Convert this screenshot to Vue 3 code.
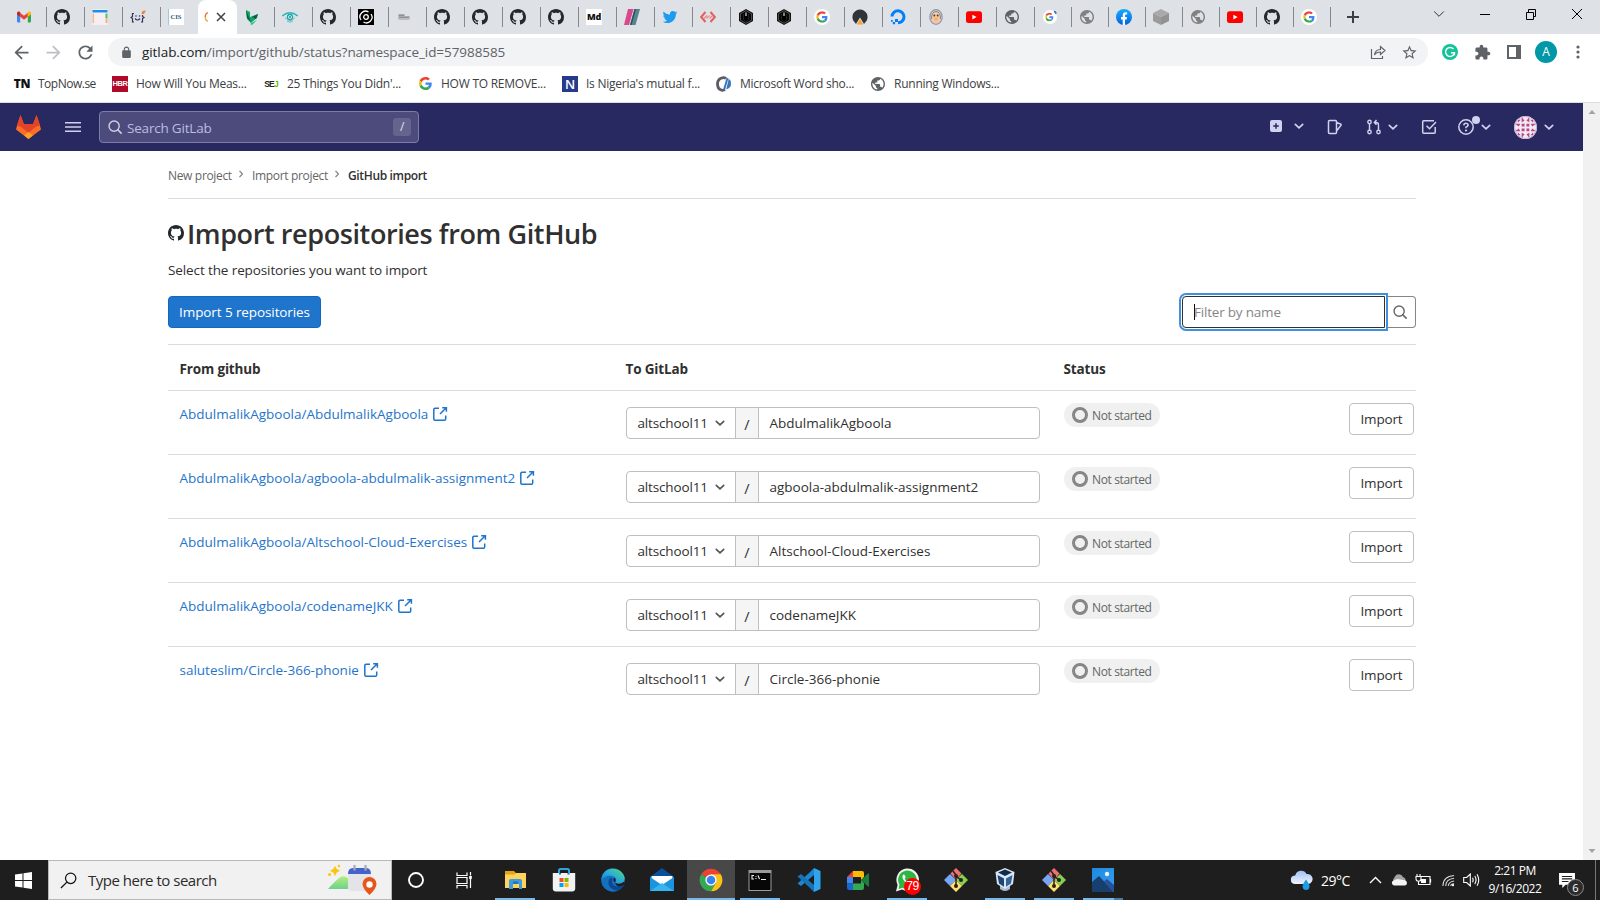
<script setup>
const leftTabs = [
  'gmail', 'github', 'board', 'bracket', 'cis', 'active', 'leaf', 'eye', 'github', 'spiral',
  'lines', 'github', 'github', 'github', 'github', 'md', 'stripes', 'twitter', 'code', 'hex',
  'hex', 'googlew', 'tent', 'ocean', 'face', 'youtube', 'globe',
]
const rightTabs = ['googlet', 'globeg', 'facebook', 'cube', 'globeg', 'youtube', 'github', 'googlew']

// Favicons made of lettering rather than a drawn shape
const lettered = { cis: 'CIS', md: 'Md', tn: 'TN', hbr: 'HBR', nn: 'N' }

const bookmarks = [
  { icon: 'tn', label: 'TopNow.se' },
  { icon: 'hbr', label: 'How Will You Meas...' },
  { icon: 'sej', label: "25 Things You Didn'..." },
  { icon: 'google', label: 'HOW TO REMOVE...' },
  { icon: 'nn', label: "Is Nigeria's mutual f..." },
  { icon: 'cslash', label: 'Microsoft Word sho...' },
  { icon: 'globe', label: 'Running Windows...' },
]

const repos = [
  { owner: 'AbdulmalikAgboola', name: 'AbdulmalikAgboola' },
  { owner: 'AbdulmalikAgboola', name: 'agboola-abdulmalik-assignment2' },
  { owner: 'AbdulmalikAgboola', name: 'Altschool-Cloud-Exercises' },
  { owner: 'AbdulmalikAgboola', name: 'codenameJKK' },
  { owner: 'saluteslim', name: 'Circle-366-phonie' },
]

const apps = [
  { icon: 'explorer', open: true },
  { icon: 'store' },
  { icon: 'edge' },
  { icon: 'mail' },
  { icon: 'chrome', open: true, active: true },
  { icon: 'cmd', open: true },
  { icon: 'vscode' },
  { icon: 'meet' },
  { icon: 'whatsapp', open: true, badge: '79' },
  { icon: 'git' },
  { icon: 'vbox', open: true },
  { icon: 'git', open: true },
  { icon: 'photos', open: true, stacked: true },
]
</script>

<template>
  <div class="screen">
    <svg class="defs" aria-hidden="true">
      <defs>
        <linearGradient id="g-edge" x1="0" y1="1" x2="1" y2="0">
          <stop offset="0" stop-color="#1176c9" /><stop offset=".5" stop-color="#27a9e0" /><stop offset="1" stop-color="#5fdf5a" />
        </linearGradient>
        <linearGradient id="g-hill" x1="0" y1="0" x2="0" y2="1">
          <stop offset="0" stop-color="#b4ef7c" /><stop offset="1" stop-color="#6ccf8e" />
        </linearGradient>
        <linearGradient id="g-cloud" x1="0" y1="0" x2="0" y2="1">
          <stop offset="0" stop-color="#9fc0f3" /><stop offset="1" stop-color="#f0f4fd" />
        </linearGradient>
        <linearGradient id="g-fb" x1="0" y1="0" x2="0" y2="1">
          <stop offset="0" stop-color="#18acfe" /><stop offset="1" stop-color="#0163e0" />
        </linearGradient>
        <linearGradient id="g-photo" x1="0" y1="0" x2="1" y2="1">
          <stop offset="0" stop-color="#1b8ae0" /><stop offset="1" stop-color="#3a9df0" />
        </linearGradient>
      </defs>
      <symbol id="gmail" viewBox="0 0 16 16">
        <path d="M1 4v8.500a1 1 0 0 0 1 1h2.200V7z" fill="#4285f4" />
        <path d="M15 4v8.500a1 1 0 0 1-1 1h-2.200V7z" fill="#34a853" />
        <path d="M4.200 3.800v4L8 10.700l3.800-2.900v-4L8 6.700z" fill="#ea4335" />
        <path d="M1 4.200C1 2.500 2.900 2 4.200 3v4.800L1 5.400z" fill="#c5221f" />
        <path d="M15 4.200C15 2.500 13.100 2 11.800 3v4.800L15 5.400z" fill="#fbbc04" />
      </symbol>
      <symbol id="github" viewBox="0 0 16 16">
        <path fill="#24292f" d="M8 0C3.580 0 0 3.580 0 8c0 3.540 2.290 6.530 5.470 7.590.4.070.55-.17.55-.38 0-.19-.01-.82-.01-1.490-2.010.37-2.530-.49-2.690-.94-.09-.23-.48-.94-.82-1.130-.28-.15-.68-.52-.01-.53.63-.01 1.080.58 1.230.82.72 1.210 1.870.87 2.330.66.07-.52.28-.87.51-1.070-1.780-.2-3.640-.89-3.640-3.950 0-.87.31-1.590.82-2.150-.08-.2-.36-1.020.08-2.120 0 0 .67-.21 2.200.82.64-.18 1.320-.27 2-.27s1.360.09 2 .27c1.530-1.040 2.200-.82 2.200-.82.44 1.100.16 1.920.08 2.120.51.56.82 1.270.82 2.150 0 3.070-1.870 3.750-3.650 3.950.29.25.54.73.54 1.480 0 1.070-.01 1.930-.01 2.200 0 .21.15.46.55.38A8.010 8.010 0 0 0 16 8c0-4.420-3.580-8-8-8z" />
      </symbol>
      <symbol id="board" viewBox="0 0 16 16">
        <rect x=".5" y=".5" width="15" height="15" fill="#fff" />
        <rect x=".5" y="1" width="15" height="2.500" fill="#1c8eea" />
        <rect x=".5" y="4" width="15" height="11.500" fill="#f6eef2" />
        <path d="M1.300 4.500v9.500" stroke="#fbb48c" stroke-width="1.500" /><path d="M14.500 4.500v5" stroke="#4fbf5f" stroke-width="2" /><path d="M14.500 10v4" stroke="#f6b07c" stroke-width="2" />
      </symbol>
      <symbol id="bracket" viewBox="0 0 16 16">
        <g fill="none" stroke="#35355c" stroke-width="1.200">
          <path d="M4 4.500H2.500v3L1 8.500l1.500 1v3.500H4M11 13h1.500V9.500l1.500-1-1.500-1V6M5 9.500q2.500 3 5 0" />
        </g>
        <circle cx="6" cy="7" r=".8" fill="#35355c" /><circle cx="9.500" cy="7" r=".8" fill="#35355c" />
        <path d="M11.500 5l1-3 3.500-.5-2 3.500z" fill="#f4802a" />
      </symbol>
      <symbol id="leaf" viewBox="0 0 16 16">
        <path d="M2 1l4 2v5l8-3-1 4-6 5-4-4z" fill="#12a66a" /><path d="M2 1l5 12-4-4zM8 8l6-3-2 5z" fill="#0b5c44" /><path d="M6 15l7-4-5 5z" fill="#19c37d" />
      </symbol>
      <symbol id="eye" viewBox="0 0 16 16">
        <path d="M.3 7Q8 .5 15.700 7" fill="none" stroke="#23b5b8" stroke-width="1.400" />
        <path d="M3 8.500Q8 14.500 13 8.500M5 12q3 2.500 6 0" fill="none" stroke="#59c6c8" />
        <circle cx="8" cy="8" r="2.500" fill="#fff" stroke="#23a0a5" stroke-width="1.300" /><circle cx="8" cy="8" r="1" fill="#16868b" />
      </symbol>
      <symbol id="spiral" viewBox="0 0 16 16">
        <rect width="16" height="16" fill="#000" />
        <g fill="none" stroke="#fff" stroke-width="1.300"><circle cx="8" cy="8" r="2.300" /><path d="M3 11A5.600 5.600 0 0 1 10.500 3M13 5A5.600 5.600 0 0 1 5.500 13" /></g>
      </symbol>
      <symbol id="lines" viewBox="0 0 16 16">
        <path d="M2.500 6.200h6M2.500 8.200h11" stroke="#777" stroke-width="1.200" /><path d="M2.500 10h11" stroke="#999" />
      </symbol>
      <symbol id="stripes" viewBox="0 0 16 16">
        <path d="M4 0h5.500L5 16H0z" fill="#d9478c" /><path d="M10.500 0H16l-4.500 16H6z" fill="#56858d" /><path d="M10.500 0H12L7.500 16H6z" fill="#324c60" />
      </symbol>
      <symbol id="twitter" viewBox="-1 -1 26 26">
        <path fill="#1d9bf0" d="M23.953 4.570a10 10 0 01-2.825.775 4.958 4.958 0 002.163-2.723c-.951.555-2.005.959-3.127 1.184a4.920 4.920 0 00-8.384 4.482C7.690 8.095 4.067 6.130 1.640 3.162a4.822 4.822 0 00-.666 2.475c0 1.710.87 3.213 2.188 4.096a4.904 4.904 0 01-2.228-.616v.06a4.923 4.923 0 003.946 4.827 4.996 4.996 0 01-2.212.085 4.936 4.936 0 004.604 3.417 9.867 9.867 0 01-6.102 2.105c-.39 0-.779-.023-1.170-.067a13.995 13.995 0 007.557 2.209c9.053 0 13.998-7.496 13.998-13.985 0-.21 0-.42-.015-.63A9.935 9.935 0 0024 4.590z" />
      </symbol>
      <symbol id="code" viewBox="0 0 16 16">
        <path d="M5.500 3L1.200 8l4.300 5M10.500 3l4.300 5-4.300 5" fill="none" stroke="#e0645c" stroke-width="2" /><path d="M4 9.500l3-3M6.500 9.500l3-3M9.500 9.500l3-3" stroke="#e88" stroke-width="1.200" />
      </symbol>
      <symbol id="hex" viewBox="0 0 16 16">
        <path d="M8 0l7 4v8l-7 4-7-4V4z" fill="#111" /><path d="M8 1.700l5.400 3.100v6.400L8 14.300l-5.400-3.100V4.800z" fill="#000" stroke="#888" stroke-width=".6" /><path d="M5.300 5v5.300l2 2h1.400l2-2V5" fill="#000" stroke="#555" stroke-width=".5" /><path d="M7.500 3.500v3.500M8.500 3.500v3.500" stroke="#ddd" stroke-width=".6" />
      </symbol>
      <symbol id="google" viewBox="0 0 48 48">
        <path fill="#ea4335" d="M24 9.500c3.540 0 6.710 1.220 9.210 3.600l6.850-6.850C35.900 2.380 30.470 0 24 0 14.620 0 6.510 5.380 2.560 13.220l7.980 6.190C12.430 13.720 17.740 9.500 24 9.500z" />
        <path fill="#4285f4" d="M46.980 24.550c0-1.570-.15-3.090-.38-4.550H24v9.020h12.940c-.58 2.960-2.260 5.480-4.780 7.180l7.730 6c4.510-4.180 7.090-10.360 7.090-17.650z" />
        <path fill="#fbbc05" d="M10.530 28.590c-.48-1.450-.76-2.990-.76-4.590s.27-3.140.76-4.590l-7.980-6.190C.92 16.460 0 20.120 0 24c0 3.880.92 7.540 2.560 10.780l7.970-6.190z" />
        <path fill="#34a853" d="M24 48c6.480 0 11.930-2.130 15.890-5.810l-7.730-6c-2.150 1.450-4.920 2.300-8.160 2.300-6.260 0-11.570-4.220-13.470-9.910l-7.980 6.190C6.510 42.620 14.620 48 24 48z" />
      </symbol>
      <symbol id="googlew" viewBox="0 0 16 16">
        <circle cx="8" cy="8" r="8" fill="#fff" /><use href="#google" x="2.200" y="2.200" width="11.600" height="11.600" />
      </symbol>
      <symbol id="googlet" viewBox="0 0 16 16">
        <circle cx="8" cy="8" r="7" fill="#fff" /><use href="#google" x="3.200" y="3.800" width="8.400" height="8.400" /><path d="M12 2.500q2 .2 1.700 2.300" fill="none" stroke="#2b6fe0" stroke-width="1.700" />
      </symbol>
      <symbol id="tent" viewBox="0 0 16 16">
        <path d="M8 .5a7.500 7.500 0 0 1 6.700 11L12 15 8 8.500 4 15l-2.700-3.500A7.500 7.500 0 0 1 8 .5z" fill="#2f3437" /><path d="M8 10l3.200 5.500H4.800z" fill="#ff9d2e" />
      </symbol>
      <symbol id="ocean" viewBox="0 0 16 16">
        <path d="M2 7.500a6 6 0 1 1 6 6.300" fill="none" stroke="#0080ff" stroke-width="3" /><path d="M5 10h3v3H5zM2.800 13h2.300v2.300H2.800zM1 11h1.800v1.800H1z" fill="#0080ff" />
      </symbol>
      <symbol id="face" viewBox="0 0 16 16">
        <ellipse cx="8" cy="8" rx="6.200" ry="7.300" fill="#f5c9a0" stroke="#8b98b5" stroke-width="1.200" /><path d="M3.500 10Q3.500 2.500 8 2.500t4.500 7.500" fill="none" stroke="#7b86a0" /><circle cx="6.300" cy="6.500" r="1" fill="#444" /><circle cx="9.700" cy="6.500" r="1" fill="#444" /><ellipse cx="8" cy="10" rx="2.200" ry="1.700" fill="#f2b078" />
      </symbol>
      <symbol id="youtube" viewBox="0 0 16 16">
        <rect y="2.200" width="16" height="11.800" rx="2.500" fill="#f00" /><path d="M6.400 5.700v4.800L10.600 8z" fill="#fff" />
      </symbol>
      <symbol id="globepath" viewBox="2 2 20 20">
        <path d="M12 2C6.480 2 2 6.480 2 12s4.480 10 10 10 10-4.480 10-10S17.520 2 12 2zm-1 17.930c-3.950-.49-7-3.850-7-7.930 0-.62.08-1.210.21-1.790L9 15v1c0 1.100.9 2 2 2v1.930zm6.900-2.540c-.26-.81-1-1.390-1.900-1.390h-1v-3c0-.55-.45-1-1-1H8v-2h2c.55 0 1-.45 1-1V7h2c1.100 0 2-.9 2-2v-.41c2.930 1.190 5 4.060 5 7.410 0 2.080-.8 3.970-2.100 5.390z" />
      </symbol>
      <symbol id="globe" viewBox="0 0 16 16"><use href="#globepath" x="1" y="1" width="14" height="14" fill="#5f6368" /></symbol>
      <symbol id="globeg" viewBox="0 0 16 16"><use href="#globepath" x="1" y="1" width="14" height="14" fill="#808080" /></symbol>
      <symbol id="facebook" viewBox="0 0 16 16">
        <circle cx="8" cy="8" r="8" fill="url(#g-fb)" /><path d="M6.700 16v-5.600H5V8h1.700V6.500c0-2 1-3.200 2.900-3.200.6 0 1.200.1 1.500.2v1.900h-1c-.8 0-1.100.4-1.100 1.200V8h2l-.4 2.400H9V16z" fill="#fff" />
      </symbol>
      <symbol id="cube" viewBox="0 0 16 16">
        <path d="M8 0l8 4-8 4-8-4z" fill="#a9a9a9" /><path d="M0 4l8 4v8l-8-4z" fill="#9b9b9b" /><path d="M16 4L8 8v8l8-4z" fill="#929292" />
      </symbol>
      <symbol id="cslash" viewBox="0 0 16 16"><path d="M10 2.500C8 1 1.500 1.500 1.500 8s5.500 7 7.500 5.500" fill="none" stroke="#5a5d63" stroke-width="2.800" /><path d="M11.500 2L8 14" stroke="#3a78bd" stroke-width="2" /><path d="M12.800 2.500l-2.600 11q5-1.500 4.800-6-.2-3.500-2.200-5z" fill="#3a78bd" /></symbol>

      <symbol id="chev" viewBox="0 0 16 16"><path d="M4.300 6.300L8 9.900l3.700-3.600" fill="none" stroke="currentColor" stroke-width="1.700" stroke-linecap="round" /></symbol>
      <symbol id="search" viewBox="0 0 16 16"><circle cx="7" cy="7" r="5.800" fill="none" stroke="currentColor" stroke-width="1.600" /><path d="M11.200 11.200L15 15" stroke="currentColor" stroke-width="1.800" stroke-linecap="round" /></symbol>
      <symbol id="external" viewBox="0 0 16 16"><path d="M7 2.200H3a1.200 1.200 0 0 0-1.200 1.200V13A1.200 1.200 0 0 0 3 14.200h9.500a1.200 1.200 0 0 0 1.200-1.200V9.500M10.200 1.700h4.200v4.100M8 8l6-6" fill="none" stroke="currentColor" stroke-width="1.500" /></symbol>

      <symbol id="explorer" viewBox="0 0 24 24"><path d="M2 3h9l2 2h9v15H2z" fill="#e8a317" /><path d="M2 6.500h9L13.500 5H23v15H2z" fill="#ffd35c" /><path d="M6 13a2 2 0 0 1 2-2h9a2 2 0 0 1 2 2v8h-3v-5h-6v5H6z" fill="#3f9be0" /><path d="M10 13.500h5V16h-5z" fill="#2374b8" /></symbol>
      <symbol id="store" viewBox="0 0 24 24"><path d="M7 7V2.500A1.500 1.500 0 0 1 8.500 1h7A1.500 1.500 0 0 1 17 2.500V7" fill="none" stroke="#2ca4e0" stroke-width="2" /><path d="M.8 5h22.400v15.500a3 3 0 0 1-3 3H3.800a3 3 0 0 1-3-3z" fill="#f2f2f2" /><path d="M7 5h2v1.500H7zM15.500 5h2v1.500h-2z" fill="#1c6da8" /><path d="M7.500 10h4v4h-4z" fill="#f25022" /><path d="M12.500 10h4v4h-4z" fill="#7fba00" /><path d="M7.500 15h4v4h-4z" fill="#00a4ef" /><path d="M12.500 15h4v4h-4z" fill="#ffb900" /></symbol>
      <symbol id="edge" viewBox="0 0 24 24"><circle cx="12" cy="12" r="11.800" fill="#1471bd" /><path d="M1 8.500C4-2 20-2 23.500 9c1.500 7-8 8.500-9.500 5.500 2-2 1-6-3-6.500C7 7 2 9 .3 13z" fill="url(#g-edge)" /><path d="M9 10c-4 5 0 12 7 12.500 3-.5 5-2.500 6-5-5 2-10 1-11-3-.3-1.600 0-2.600.6-3.500C11 10.500 10 10 9 10z" fill="#0c4795" /><path d="M14 14.500c-2-1-2.300-3.500-.5-5 1.500 1.500 1.500 3.500.5 5z" fill="#1e1e1e" /><path d="M14 14.500q4 3 9.500-1v3q-2.500 2.500-6 2-3-1-3.500-4z" fill="#1e1e1e" /></symbol>
      <symbol id="mail" viewBox="0 0 24 24"><path d="M0 9l12-9 12 9v3H0z" fill="#0b4f9c" /><path d="M1.500 8h21v8h-21z" fill="#fff" /><path d="M0 9l12 8 12-8v14H0z" fill="#1b93dd" /><path d="M0 23L12 15l12 8z" fill="#35b4f0" /></symbol>
      <symbol id="chrome" viewBox="0 0 24 24"><path d="M12 12L2.200 6.300A11.300 11.300 0 0 1 21.800 6.300z" fill="#ea4335" /><path d="M12 12l5 2.800L12 23.300A11.300 11.300 0 0 1 2.200 6.300z" fill="#34a853" /><path d="M12 12V6.300h9.800A11.300 11.300 0 0 1 12 23.300l5-8.500z" fill="#fbc116" /><circle cx="12" cy="12" r="5.600" fill="#fff" /><circle cx="12" cy="12" r="4.300" fill="#3b82f0" /></symbol>
      <symbol id="cmd" viewBox="0 0 24 24"><path d="M.5 2h23v21H.5z" fill="#9b9b9b" /><path d="M1.500 5h21v17h-21z" fill="#070707" /><path d="M6 7.500H4V11h2M8 8v.7M8 10v1M10 7.500l1.500 3.500M13 11.500h5" fill="none" stroke="#eee" stroke-width="1.100" /></symbol>
      <symbol id="vscode" viewBox="0 0 24 24"><path d="M17 0v7L4 18 .5 15.500 12 5z" fill="#1b86cf" /><path d="M17 24v-7L4 6 .5 8.500 12 19z" fill="#1574b8" /><path d="M17 0l6.500 3v18L17 24z" fill="#2ea5ec" /></symbol>
      <symbol id="meet" viewBox="0 0 24 24"><path d="M7 3v6H1z" fill="#ea4335" /><path d="M7 3h9a2 2 0 0 1 2 2v4l-3 3V9H7z" fill="#fbbc04" /><path d="M1 9h6v6.500H1z" fill="#4285f4" /><path d="M1 15.500h6V22H3a2 2 0 0 1-2-2z" fill="#1967d2" /><path d="M7 15.500h8V12l3 3v5a2 2 0 0 1-2 2H7z" fill="#34a853" /><path d="M15 12l7-6.500q1-.5 1 .5v12q0 1-1 .5z" fill="#188038" /></symbol>
      <symbol id="whatsapp" viewBox="0 0 24 24"><path d="M1 23.500L2.600 17A11.300 11.300 0 1 1 7 21.600z" fill="#f3f3f3" /><path d="M3.500 21l1-4.200A9.300 9.300 0 1 1 7.500 19.800z" fill="#2bb741" /><path d="M8.500 6.500c-2.500 2 0 6.500 3 8.500 2.500 1.500 4.500 1.500 5.500-.5l-2.500-1.700-1.200 1.300c-1.600-.7-3-2-3.600-3.700l1-1-1.200-2.700z" fill="#fff" /></symbol>
      <symbol id="git" viewBox="0 0 24 24"><path d="M12 0l5.500 5.500L12 12 6.500 5.500z" fill="#ef7070" /><path d="M0 12l6-6 6 6-6 6z" fill="#76a6f5" /><path d="M24 12l-6-6-6 6 6 6z" fill="#86d04d" /><path d="M12 24l-6-6 6-6 6 6z" fill="#ffe06a" /><path d="M9 3l3 4v11M12 8l5 4" stroke="#2a2020" stroke-width="1.500" fill="none" /><circle cx="12" cy="8" r="2" fill="#2a2020" /><circle cx="12" cy="18" r="2" fill="#2a2020" /><circle cx="17" cy="12" r="2" fill="#2a2020" /></symbol>
      <symbol id="vbox" viewBox="0 0 24 24"><path d="M7 16l5 2 5-2v5q-5 4-10 0z" fill="#a8bcd6" /><path d="M12 0l9.500 4-1.500 12-8 5-8-5L2.500 4z" fill="#dbe7f3" /><path d="M12 1.500L19 4.500l-7 3.500-7-3.500z" fill="#102a4c" /><path d="M4.500 7l6.500 3.500v8.200L6 15.500z" fill="#1c4478" /><path d="M19.500 7L13 10.500v8.200l5-3.200z" fill="#31639c" /></symbol>
      <symbol id="photos" viewBox="0 0 24 24"><path d="M1 0h22v24H1z" fill="url(#g-photo)" /><path d="M1 14l7-6 15 16H1z" fill="#17406f" /><path d="M13 13.300l3-2.300 7 6v7z" fill="#2a4f9a" /><circle cx="16" cy="6" r="2.200" fill="#e6f4ff" /></symbol>
    </svg>

    <!-- Browser tab strip -->
    <div class="tabs">
      <template v-for="(t, i) in leftTabs" :key="'l' + i">
        <div v-if="t === 'active'" class="tab tab-active">
          <svg class="spin" viewBox="0 0 5 16"><path d="M4 3Q1 4 1 8" fill="none" stroke="#ef6c2e" stroke-width="1.400" /><path d="M1 8q0 4 3 5" fill="none" stroke="#f2a33c" stroke-width="1.400" /></svg>
          <svg class="x" viewBox="0 0 10 10"><path d="M1 1l8 8M9 1L1 9" stroke="#3c4043" stroke-width="1.500" /></svg>
        </div>
        <div v-else class="tab" :class="{ bare: i === 4 }">
          <span v-if="lettered[t]" class="lt" :class="t">{{ lettered[t] }}</span>
          <svg v-else class="fav"><use :href="'#' + t" /></svg>
        </div>
      </template>
      <div v-for="(t, i) in rightTabs" :key="'r' + i" class="tab narrow"><svg class="fav"><use :href="'#' + t" /></svg></div>
      <svg class="plus" viewBox="0 0 12 12"><path d="M6 0v12M0 6h12" stroke="#3c4043" stroke-width="2" /></svg>
      <div class="winctl">
        <svg viewBox="0 0 12 12"><path d="M1.200 3.500L6 8.300l4.800-4.800" fill="none" stroke="#333" /></svg>
        <svg viewBox="0 0 12 12"><path d="M1 6.500h10" stroke="#000" /></svg>
        <svg viewBox="0 0 12 12"><path d="M1.500 4.500h7v7h-7zM3.500 4.500v-3h7v7h-2" fill="none" stroke="#000" /></svg>
        <svg viewBox="0 0 12 12"><path d="M1 1l10 10M11 1L1 11" stroke="#000" /></svg>
      </div>
    </div>

    <!-- Toolbar -->
    <div class="toolbar">
      <span class="nav"><svg viewBox="0 0 24 24"><path fill="#5f6368" d="M20 11H7.830l5.590-5.590L12 4l-8 8 8 8 1.410-1.410L7.830 13H20v-2z" /></svg></span>
      <span class="nav"><svg viewBox="0 0 24 24"><path fill="#bdc0c4" d="M12 4l-1.410 1.410L16.170 11H4v2h12.170l-5.580 5.590L12 20l8-8z" /></svg></span>
      <span class="nav"><svg viewBox="0 0 24 24"><path fill="#5f6368" d="M17.650 6.350C16.200 4.900 14.210 4 12 4c-4.420 0-7.990 3.580-7.990 8s3.570 8 7.990 8c3.730 0 6.840-2.550 7.730-6h-2.080c-.82 2.330-3.040 4-5.650 4-3.310 0-6-2.690-6-6s2.690-6 6-6c1.660 0 3.140.69 4.220 1.780L13 11h7V4l-2.350 2.350z" /></svg></span>
      <div class="omnibox">
        <svg class="lock" viewBox="0 0 24 24"><path fill="#5f6368" d="M18 8h-1V6c0-2.760-2.240-5-5-5S7 3.240 7 6v2H6c-1.100 0-2 .9-2 2v10c0 1.100.9 2 2 2h12c1.100 0 2-.9 2-2V10c0-1.100-.9-2-2-2zM9 6c0-1.660 1.340-3 3-3s3 1.340 3 3v2H9z" /></svg>
        <span class="url"><b>gitlab.com</b>/import/github/status?namespace_id=57988585</span>
        <svg class="share" viewBox="0 0 16 16"><path d="M1.500 5v9.500h11V12M4.500 11c.5-4 2.500-5.500 6-5.500V2.500l4.500 4-4.500 4V8C8 8 6 8.500 4.500 11z" fill="none" stroke="#5f6368" stroke-width="1.200" /></svg>
        <svg class="star" viewBox="0 0 24 24"><path fill="#5f6368" d="M22 9.240l-7.190-.62L12 2 9.190 8.630 2 9.240l5.460 4.730L5.820 21 12 17.270 18.180 21l-1.630-7.030L22 9.240zM12 15.400l-3.760 2.270 1-4.280-3.320-2.880 4.380-.38L12 6.100l1.710 4.040 4.380.38-3.320 2.880 1 4.280L12 15.400z" /></svg>
      </div>
      <div class="exts">
        <span><svg class="e16" viewBox="0 0 16 16"><circle cx="8" cy="8" r="8" fill="#15c39a" /><path d="M11.500 5A4.500 4.500 0 1 0 12.300 9.500M9 8.700h3.500v2.600" fill="none" stroke="#fff" stroke-width="1.400" /></svg></span>
        <span><svg class="e17" viewBox="0 0 24 24"><path fill="#5f6368" d="M20.500 11H19V7c0-1.100-.9-2-2-2h-4V3.500C13 2.120 11.880 1 10.500 1S8 2.120 8 3.500V5H4c-1.100 0-1.990.9-1.990 2v3.800H3.500c1.490 0 2.700 1.210 2.700 2.700s-1.210 2.700-2.700 2.700H2V20c0 1.100.9 2 2 2h3.800v-1.500c0-1.490 1.210-2.700 2.700-2.700 1.490 0 2.700 1.210 2.700 2.700V22H17c1.100 0 2-.9 2-2v-4h1.500c1.380 0 2.500-1.120 2.500-2.500S21.880 11 20.500 11z" /></svg></span>
        <span><svg class="e14" viewBox="0 0 14 14"><path d="M0 0h14v14H0zM2 2v10h7V2z" fill="#5f6368" fill-rule="evenodd" /></svg></span>
        <span><i class="profile">A</i></span>
        <span><svg class="e16" viewBox="0 0 16 16"><g fill="#5f6368"><circle cx="8" cy="3" r="1.600" /><circle cx="8" cy="8" r="1.600" /><circle cx="8" cy="13" r="1.600" /></g></svg></span>
      </div>
    </div>

    <!-- Bookmarks -->
    <div class="bookmarks">
      <div v-for="b in bookmarks" :key="b.label" class="bm" :class="'bm-' + b.icon">
        <span v-if="lettered[b.icon]" class="lt" :class="b.icon">{{ lettered[b.icon] }}</span>
        <span v-else-if="b.icon === 'sej'" class="lt sej">SE<i>J</i></span>
        <svg v-else><use :href="'#' + b.icon" /></svg>
        <span>{{ b.label }}</span>
      </div>
    </div>

    <!-- Page -->
    <div class="viewport">
      <div class="page">
        <header class="gl-head">
          <svg class="tanuki" viewBox="0 0 25 24"><path d="M12.500 24L0 14.500 1.300 9.500 4.500 0l3.300 9h9.400l3.300-9 3.200 9.500 1.300 5z" fill="#fc6d26" /><path d="M4.500 0l3.300 9h9.400l3.300-9 3.500 10.500q-4 .5-6.500 3L12.500 18 7 13.500q-2.500-2.500-6-3z" fill="#e24329" /><path d="M12.500 17l4.300 3.500-4.300 3.500-4.300-3.500z" fill="#fca326" /></svg>
          <svg class="burger" viewBox="0 0 16 10"><path d="M0 .75h16M0 5h16M0 9.250h16" stroke="#d1d1f0" stroke-width="1.500" /></svg>
          <div class="gl-search"><svg><use href="#search" /></svg><span>Search GitLab</span><kbd>/</kbd></div>
          <div class="gl-nav">
            <svg class="n-plus" viewBox="0 0 12 12"><rect width="12" height="12" rx="2" fill="#d1d1f0" /><path d="M6 3.200v5.600M3.200 6h5.600" stroke="#292961" stroke-width="1.500" /></svg>
            <svg class="n-c1"><use href="#chev" /></svg>
            <svg class="n-issues" viewBox="0 0 16 16"><path d="M2.500 1.500h6a1 1 0 0 1 1 1v11a1 1 0 0 1-1 1h-6a1 1 0 0 1-1-1v-11a1 1 0 0 1 1-1zM9.500 3.500l4 1.500a1 1 0 0 1 .6 1.200L9.500 12" fill="none" stroke="currentColor" stroke-width="1.500" /></svg>
            <svg class="n-mr" viewBox="0 0 16 16"><g fill="none" stroke="currentColor" stroke-width="1.400"><circle cx="3.500" cy="3" r="1.700" /><circle cx="3.500" cy="13" r="1.700" /><circle cx="12.500" cy="13" r="1.700" /><path d="M3.500 4.700v6.600M12.500 11.300V6a2.500 2.500 0 0 0-2.500-2.500H8.500M10.500 1L8.300 3.500l2.200 2.300" /></g></svg>
            <svg class="n-c2"><use href="#chev" /></svg>
            <svg class="n-todo" viewBox="0 0 16 16"><path d="M13 1.800H2.700a1 1 0 0 0-1 1v10.500a1 1 0 0 0 1 1h10.500a1 1 0 0 0 1-1V8M5.500 6.800l3 3L15 3" fill="none" stroke="currentColor" stroke-width="1.500" /></svg>
            <span class="n-help"><svg viewBox="0 0 16 16"><circle cx="8" cy="8" r="7.200" fill="none" stroke="currentColor" stroke-width="1.500" /><path d="M5.800 6.300Q6 4.300 8 4.300t2.200 1.800Q10.200 7.300 8 8.300v1" fill="none" stroke="currentColor" stroke-width="1.600" /><circle cx="8" cy="11.500" r="1.100" fill="currentColor" /></svg><i></i></span>
            <svg class="n-c3"><use href="#chev" /></svg>
            <svg class="n-avatar" viewBox="0 0 24 24"><circle cx="12" cy="12" r="12" fill="#f2ebf2" /><g fill="#b8468c"><path d="M8 8h3v3H8zM13 8h3v3h-3zM8 13h3v3H8zM13 13h3v3h-3z" /><path d="M8 1l3 4-3 1.500zM16 1l-3 4 3 1.500zM8 23l3-4-3-1.500zM16 23l-3-4 3-1.500zM1 8l4 3 1.500-3zM1 16l4-3 1.500 3zM23 8l-4 3-1.500-3zM23 16l-4-3-1.500 3z" /><path d="M4 4l3 0-3 3zM20 4l-3 0 3 3zM4 20l3 0-3-3zM20 20l-3 0 3-3z" /></g><circle cx="12" cy="12" r="11.500" fill="none" stroke="#c4a9cc" stroke-width="1" /></svg>
            <svg class="n-c4"><use href="#chev" /></svg>
          </div>
        </header>

        <main>
          <nav class="crumbs">
            <span class="c1">New project</span><svg viewBox="0 0 8 8"><path d="M2.500 1l3 3-3 3" fill="none" stroke="#868686" stroke-width="1.200" /></svg>
            <span class="c2">Import project</span><svg viewBox="0 0 8 8"><path d="M2.500 1l3 3-3 3" fill="none" stroke="#868686" stroke-width="1.200" /></svg>
            <b>GitHub import</b>
          </nav>
          <h1><svg><use href="#github" /></svg><span>Import repositories from GitHub</span></h1>
          <p class="lead">Select the repositories you want to import</p>
          <div class="actions">
            <button class="primary">Import 5 repositories</button>
            <div class="filter"><div class="field"><i></i><span>Filter by name</span></div><div class="go"><svg><use href="#search" /></svg></div></div>
          </div>
          <div class="table">
            <div class="row head"><span>From github</span><span>To GitLab</span><span>Status</span></div>
            <div v-for="r in repos" :key="r.name" class="row">
              <a class="from">{{ r.owner }}/{{ r.name }}<svg><use href="#external" /></svg></a>
              <div class="to">
                <div class="ns">altschool11<svg><use href="#chev" /></svg></div>
                <div class="sep">/</div>
                <div class="name">{{ r.name }}</div>
              </div>
              <div class="status"><span class="pill"><i></i>Not started</span></div>
              <div class="act"><button>Import</button></div>
            </div>
          </div>
        </main>
      </div>
      <div class="scroll">
        <svg viewBox="0 0 7 4"><path d="M0 4l3.500-4L7 4z" fill="#a3a3a3" /></svg>
        <svg viewBox="0 0 7 4"><path d="M0 0l3.500 4L7 0z" fill="#a3a3a3" /></svg>
      </div>
    </div>

    <!-- Windows taskbar -->
    <div class="taskbar">
      <div class="start"><svg viewBox="0 0 17 17"><path d="M0 2.400l7.500-1V8H0zM8.500 1.200L17 0v8H8.500zM0 9h7.500v6.600L0 14.600zM8.500 9H17v8l-8.500-1.200z" fill="#fff" /></svg></div>
      <div class="tsearch">
        <svg class="mag" viewBox="0 0 18 18"><circle cx="11.300" cy="6.700" r="5.500" fill="none" stroke="#111" stroke-width="1.300" /><path d="M7.300 10.700L1 17" stroke="#111" stroke-width="1.400" /></svg>
        <span>Type here to search</span>
        <svg class="scene" viewBox="0 0 50 32">
          <path d="M0 25Q7 17 12 13.500q4-3 8 1L20 25z" fill="url(#g-hill)" />
          <path d="M20 10h23v13a4 4 0 0 1-4 4H24a4 4 0 0 1-4-4z" fill="#e4e4e8" /><path d="M20 10q0-6 5-6h13q5 0 5 6z" fill="#4263cb" /><path d="M26.500 1v5.500M37.500 1v5.500" stroke="#a9abb5" stroke-width="2.200" />
          <path d="M7 2l1.700 3L12 6.700 8.700 8.500 7 12 5.300 8.500 2 6.700 5.300 5z" fill="#fcc40c" /><circle cx="1.500" cy="10.500" r="1.500" fill="#fcc40c" /><circle cx="11" cy="2" r="1.200" fill="#fcc40c" />
          <path d="M41.500 31q-7-6.500-7-11a7 7 0 0 1 14 0q0 4.500-7 11z" fill="#e8551a" /><circle cx="41.500" cy="20.500" r="3.200" fill="#fff" />
        </svg>
      </div>
      <div class="sys"><svg viewBox="0 0 18 18"><circle cx="9" cy="9" r="7" fill="none" stroke="#fff" stroke-width="1.900" /></svg></div>
      <div class="sys"><svg viewBox="0 0 18 18"><path d="M2 1.500v3h10v-3M2 6.500h10v6H2zM2 17.500v-3h10v3M15.500 1v3.500M15.500 8v9" fill="none" stroke="#fff" stroke-width="1.200" /><path d="M14.200 5h2.600v3h-2.600z" fill="#fff" /></svg></div>
      <div class="apps">
        <div v-for="(a, i) in apps" :key="i" class="app" :class="{ open: a.open, active: a.active, stacked: a.stacked }">
          <svg><use :href="'#' + a.icon" /></svg><em v-if="a.badge">{{ a.badge }}</em>
        </div>
      </div>
      <div class="tray">
        <svg class="t-weather" viewBox="0 0 23 20"><path d="M4.500 14a4.300 4.300 0 0 1 0-8.500h.8A6 6 0 0 1 16.500 4a5 5 0 0 1 2 10z" fill="url(#g-cloud)" /><path d="M16 9.500q3.500 4.500 3.500 7a3.400 3.400 0 0 1-6.900 0q0-2.500 3.400-7z" fill="#1c9ce4" /></svg>
        <span class="temp">29°C</span>
        <svg class="t-up" viewBox="0 0 13 8"><path d="M1 7l5.500-5.500L12 7" fill="none" stroke="#fff" stroke-width="1.400" /></svg>
        <svg class="t-cloud" viewBox="0 0 17 12"><path d="M3 8a3 3 0 0 1 .5-4.500A4.500 4.500 0 0 1 12 3q3 1 2.500 4z" fill="#a2a2a2" /><path d="M3 11.500a2.700 2.700 0 0 1 0-5.300L6.500 5 14 6.300a2.700 2.700 0 0 1 0 5.200z" fill="#f4f4f4" /></svg>
        <svg class="t-batt" viewBox="0 0 17 12"><path d="M5.500 2.500H15v8H3.500V8M15.600 5v3.500M1 2.500h5v2.200a2.500 2.500 0 0 1-5 0zM2 0v2.500M5 0v2.500M3.500 7v2" fill="none" stroke="#fff" stroke-width="1.100" /><path d="M6 5h5v4H6z" fill="#fff" /></svg>
        <svg class="t-wifi" viewBox="0 0 14 13"><g fill="none" stroke="#d8d8d8" stroke-width="1.100"><path d="M1 12.500Q1 2 13 1M4 12.500Q4 5 13 4M6.700 12.500Q7 8 13 7" /><path d="M9.300 12.500Q9.500 10.300 13 10" /></g><circle cx="11.800" cy="11.500" r="1.200" fill="#fff" /></svg>
        <svg class="t-vol" viewBox="0 0 17 14"><path d="M.7 4.500h3L7.300 1v12L3.700 9.500h-3zM9.500 4.700q1.300 2.300 0 4.600M11.800 3q2.500 4 0 8M14 1.300q3.500 5.700 0 11.400" fill="none" stroke="#fff" stroke-width="1.100" /></svg>
        <div class="clock"><span class="time">2:21 PM</span><span class="date">9/16/2022</span></div>
        <span class="notif"><svg viewBox="0 0 17 16"><path d="M0 0h17v12.500H7L3.500 16v-3.500H0z" fill="#fff" /><path d="M3 3.700h11M3 6.300h11M3 9h7" stroke="#1e1e1e" stroke-width="1.200" /></svg><em>6</em></span>
        <i class="peek"></i>
      </div>
    </div>
  </div>
</template>

<style>
body { margin: 0; overflow: hidden; }
</style>

<style scoped>
* { box-sizing: border-box; }
.screen { width: 1600px; height: 900px; overflow: hidden; display: flex; flex-direction: column; background: #fff; font-family: "Open Sans", "Noto Sans", sans-serif; color: #303030; white-space: nowrap; }
.defs { position: absolute; width: 0; height: 0; }
svg { display: block; flex: none; }
i, em { font-style: normal; }

.tabs { height: 34px; flex: none; background: #dee1e6; display: flex; padding-left: 8px; }
.tab { width: 38px; display: flex; align-items: center; padding-left: 8px; position: relative; flex: none; }
.tab::after { content: ""; position: absolute; right: -1px; top: 7px; width: 1px; height: 20px; background: #85888d; }
.tab.narrow { width: 37px; padding-left: 8px; }
.tab.bare::after, .tab-active::after { display: none; }
.fav { width: 16px; height: 16px; }
.tab-active { background: #fff; border-radius: 8px 8px 0 0; padding-left: 6px; width: 39px; margin-right: -1px; }
.spin { width: 5px; height: 14px; }
.x { width: 10px; height: 10px; margin-left: 7px; }
.plus { width: 12px; height: 12px; margin: 11px 0 0 17px; }
.winctl { display: flex; margin: 8px 0 0 74px; gap: 34px; }
.winctl svg { width: 12px; height: 12px; }

.lt { width: 16px; height: 16px; flex: none; display: flex; justify-content: center; font-family: "Liberation Sans", sans-serif; font-weight: 700; line-height: 16px; }
.cis { background: #fff; color: #2a5775; font: 700 6.500px/16px "Liberation Serif", serif; box-shadow: inset 2px 0 1px -1px #9cc3d8; letter-spacing: 0; }
.md { background: #fff; color: #111; font: 800 9px/15px "Open Sans", sans-serif; letter-spacing: -0.300px; }
.tn { color: #111; font: 800 12px/16px "Open Sans", sans-serif; letter-spacing: -0.300px; }
.hbr { background: #b0092b; color: #fff; font-size: 7.500px; letter-spacing: -0.350px; }
.nn { background: #263a8b; color: #fff; font: 600 13px/16px "Open Sans", sans-serif; letter-spacing: 0; }
.sej { color: #222; font-size: 8.500px; letter-spacing: -0.800px; }
.sej i { color: #66b50e; }

.toolbar { height: 36px; flex: none; display: flex; align-items: center; padding-left: 6px; }
.nav { width: 32px; display: flex; justify-content: center; }
.nav svg { width: 21px; height: 21px; margin-right: 1px; }
.omnibox { margin-left: 6px; width: 1320px; height: 28px; border-radius: 14px; background: #f1f3f4; display: flex; align-items: center; flex: none; }
.lock { width: 13px; height: 13px; margin-left: 11.500px; }
.url { margin-left: 9.500px; flex: 1; font-size: 13.500px; letter-spacing: -0.060px; color: #5f6368; }
.url b { font-weight: 400; color: #202124; }
.share { width: 16px; height: 16px; margin-right: 15px; }
.star { width: 17px; height: 17px; margin-right: 10px; }
.exts { display: flex; margin-left: 6px; }
.exts span { width: 32px; display: flex; justify-content: center; align-items: center; }
.e16 { width: 16px; height: 16px; }
.e17 { width: 17px; height: 17px; }
.e14 { width: 14px; height: 14px; }
.profile { width: 22px; height: 22px; border-radius: 50%; background: #0097a7; color: #fff; font-size: 12px; line-height: 22px; text-align: center; }

.bookmarks { height: 33px; flex: none; padding: 0 0 5px 14px; border-bottom: 1px solid #dadce0; display: grid; grid-template-columns: 98px 151px 154px 145px 154px 154px 150px; align-items: center; }
.bm { display: flex; align-items: center; gap: 8px; font-size: 12px; letter-spacing: -0.250px; color: #3c4043; }
.bm-tn { letter-spacing: -0.500px; }
.bm svg { width: 16px; height: 16px; }
.bm-google svg { width: 13px; height: 13px; margin: 0 1px 0 2px; }

.viewport { height: 757px; flex: none; display: flex; }
.page { width: 1583px; }
.scroll { width: 17px; background: #f1f1f1; display: flex; flex-direction: column; justify-content: space-between; align-items: center; padding: 7px 0; }
.scroll svg { width: 8px; height: 4px; }

.gl-head { height: 48px; background: #292961; display: flex; align-items: center; padding-left: 16px; color: #d1d1f0; }
.tanuki { width: 25px; height: 24px; }
.burger { width: 16px; height: 10px; margin-left: 24px; }
.gl-search { margin-left: 18px; width: 320px; height: 32px; border: 1px solid #7c7ca8; border-radius: 4px; background: #4c4b7c; display: flex; align-items: center; padding: 0 7px 0 8px; font-size: 13.500px; letter-spacing: -0.200px; color: #bdbde0; }
.gl-search svg { width: 14px; height: 14px; margin-right: 5px; color: #cfcfe8; }
.gl-search span { flex: 1; padding-top: 2px; }
.gl-search kbd { width: 18px; height: 18px; border-radius: 3px; background: #65648e; text-align: center; font: 12px/18px "Open Sans", sans-serif; color: #e0e0f4; }
.gl-nav { display: flex; align-items: center; margin-left: 851px; }
.gl-nav > svg { width: 16px; height: 16px; }
.gl-nav .n-plus { width: 12px; height: 12px; margin-bottom: 2px; }
.n-c1 { margin-left: 9px; margin-bottom: 2px; }
.n-issues { margin-left: 20px; }
.n-mr { margin-left: 23px; }
.n-c2 { margin-left: 3px; }
.n-todo { margin-left: 20px; }
.n-help { margin-left: 21px; position: relative; }
.n-help svg { width: 16px; height: 16px; }
.n-help i { position: absolute; left: 14px; top: -3px; width: 8px; height: 8px; border-radius: 50%; background: #d1d1f0; }
.n-c3 { margin-left: 4px; }
.gl-nav .n-avatar { width: 23px; height: 23px; margin-left: 20px; }
.n-c4 { margin-left: 4px; }

main { width: 1248px; margin-left: 168px; }
.crumbs { height: 48px; border-bottom: 1px solid #dbdbdb; display: flex; align-items: center; font-size: 12px; color: #666; letter-spacing: -0.330px; padding-top: 2px; }
.crumbs svg { width: 8px; height: 8px; margin-bottom: 3px; }
.c1 { width: 69px; }
.c2 { width: 81px; margin-left: 7px; }
.crumbs b { margin-left: 7px; font-weight: 600; color: #303030; letter-spacing: -0.350px; }
h1 { margin: 14px 0 0; height: 40px; display: flex; align-items: center; font-size: 27px; font-weight: 600; letter-spacing: -0.400px; }
h1 svg { width: 16px; height: 16px; margin: 0 3px 1px 0; }
.lead { margin: 6px 0 0; height: 24px; line-height: 23px; font-size: 13.500px; letter-spacing: -0.110px; }
.actions { margin-top: 13px; display: flex; justify-content: space-between; }
button { font-family: inherit; font-size: 13.500px; letter-spacing: -0.150px; height: 32px; border: 1px solid #bfbfbf; border-radius: 4px; background: #fff; color: #303030; padding: 0; }
.primary { width: 153px; background: #1f75cb; border-color: #1068bf; color: #fff; letter-spacing: -0.100px; }
.filter { display: flex; }
.field { width: 203px; height: 32px; border: 1px solid #303030; border-radius: 4px 0 0 4px; box-shadow: 0 0 0 1px #fff, 0 0 0 3px #428fdc; display: flex; align-items: center; padding-left: 11px; font-size: 13.500px; letter-spacing: -0.200px; color: #868686; position: relative; z-index: 1; }
.field i { width: 1px; height: 16px; margin-right: -1px; background: #111; }
.go { width: 31px; height: 32px; border: 1px solid #868686; border-left: 0; border-radius: 0 4px 4px 0; display: flex; align-items: center; padding-left: 8px; color: #666; }
.go svg { width: 14px; height: 14px; }

.table { margin-top: 16px; border-top: 1px solid #dbdbdb; font-size: 13.500px; }
.row { display: grid; grid-template-columns: 446px 438px 240px 1fr; height: 64px; border-bottom: 1px solid #dbdbdb; }
.row:last-child { border-bottom: 0; }
.head { height: 46px; align-items: center; font-weight: 700; letter-spacing: -0.150px; }
.head span { padding: 2px 0 0 11.500px; }
.from { display: flex; height: 20px; align-items: center; margin: 13px 0 0 11.500px; color: #1f75cb; letter-spacing: 0; }
.from svg { width: 16px; height: 16px; margin: 0 0 1px 4px; }
.to { margin: 16px 12px 0; height: 32px; display: flex; border: 1px solid #bfbfbf; border-radius: 4px; overflow: hidden; line-height: 30px; }
.ns { width: 108px; display: flex; align-items: center; padding-left: 10.500px; justify-content: space-between; padding-right: 7px; color: #303030; letter-spacing: -0.150px; }
.ns svg { width: 16px; height: 16px; color: #555; }
.sep { width: 24px; border: solid #bfbfbf; border-width: 0 1px; background: #f5f5f5; text-align: center; line-height: 33px; font-size: 14.500px; }
.name { padding-left: 10.500px; }
.status { padding: 12px 0 0 12px; }
.pill { display: flex; align-items: center; width: 96px; height: 24px; border-radius: 12px; background: #f0f0f0; font-size: 12px; letter-spacing: -0.370px; color: #666; padding-left: 8px; }
.pill i { width: 16px; height: 16px; border: 2.500px solid #868686; border-width: 3px; border-radius: 50%; margin-right: 4px; flex: none; }
.act { padding-top: 12px; display: flex; justify-content: flex-end; padding-right: 2px; }
.act button { width: 65px; }

.taskbar { height: 40px; flex: none; background: #1e1e1e; display: flex; color: #fff; }
.start { width: 48px; display: flex; align-items: center; justify-content: center; }
.start svg { width: 17px; height: 17px; margin-right: 1px; }
.tsearch { width: 344px; background: #f1f1f1; border: 1px solid #b8b8b8; display: flex; align-items: center; padding-left: 11px; color: #2b2b2b; font-size: 15px; letter-spacing: -0.490px; }
.mag { width: 17px; height: 17px; margin-right: 11px; }
.tsearch span { flex: 1; }
.scene { width: 50px; height: 32px; margin-right: 13px; }
.sys { width: 48px; display: flex; align-items: center; justify-content: center; }
.sys svg { width: 18px; height: 18px; }
.apps { display: flex; margin-left: 2px; }
.app { width: 49px; display: flex; align-items: center; justify-content: center; position: relative; }
.app svg { width: 24px; height: 24px; }
.app.open::after { content: ""; position: absolute; left: 5px; right: 4px; bottom: 0; height: 2px; background: #76b9ed; }
.app.active { background: linear-gradient(90deg, transparent 1px, #484848 1px); }
.app.active::after { left: 1px; right: 0; }
.app.stacked::after { background: linear-gradient(90deg, #76b9ed 31px, #4a7ba2 31px); }
.app em { position: absolute; left: 22px; top: 18px; width: 17px; height: 17px; border-radius: 50%; background: #f00; font: 12px/17px "Liberation Sans", sans-serif; letter-spacing: -0.500px; text-align: center; }
.tray { flex: 1; display: flex; align-items: center; padding-left: 163px; }
.t-weather { width: 23px; height: 20px; }
.temp { margin-left: 8px; width: 31px; font-size: 14px; letter-spacing: -0.500px; }
.t-up { width: 13px; height: 8px; margin-left: 17px; }
.t-cloud { width: 17px; height: 12px; margin-left: 9px; }
.t-batt { width: 17px; height: 12px; margin-left: 7px; }
.t-wifi { width: 13px; height: 13px; margin-left: 10px; }
.t-vol { width: 17px; height: 14px; margin-left: 8px; }
.clock { width: 70px; margin-left: 0; display: flex; flex-direction: column; align-items: center; font-size: 12px; line-height: 18px; letter-spacing: -0.450px; }
.notif { position: relative; margin-left: 9px; }
.notif svg { width: 16px; height: 15px; }
.notif em { position: absolute; left: 8px; top: 6px; width: 17px; height: 17px; border-radius: 50%; border: 1px solid #8a8a8a; background: #2c2c2c; font-size: 11px; line-height: 15px; text-align: center; letter-spacing: 0; }
.peek { width: 1px; height: 40px; background: #777; margin-left: auto; margin-right: 4px; }
</style>
